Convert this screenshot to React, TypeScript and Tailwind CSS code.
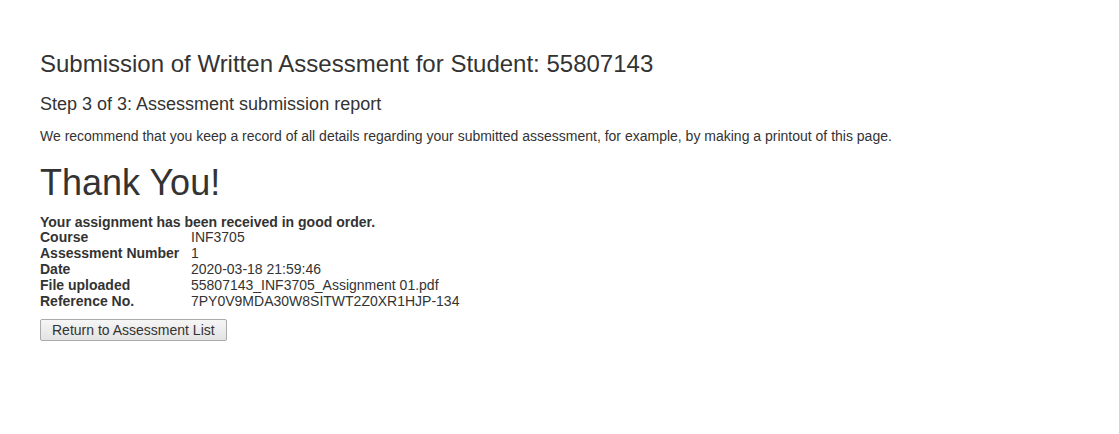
import React from "react";

export default function App() {
  const rows: [string, string][] = [
    ["Course", "INF3705"],
    ["Assessment Number", "1"],
    ["Date", "2020-03-18 21:59:46"],
    ["File uploaded", "55807143_INF3705_Assignment 01.pdf"],
    ["Reference No.", "7PY0V9MDA30W8SITWT2Z0XR1HJP-134"],
  ];
  return (
    <div className="w-[1119px] h-[434px] bg-white text-[#333] px-[40px] pt-[50px] font-['Liberation_Sans',Arial,sans-serif]">
      <h3 className="text-[24px] leading-[28px] m-0">Submission of Written Assessment for Student: 55807143</h3>
      <h4 className="text-[18px] leading-[20px] mt-[16px]">Step 3 of 3: Assessment submission report</h4>
      <p className="text-[14px] leading-[20px] mt-[12px]">
        We recommend that you keep a record of all details regarding your submitted assessment, for example, by making a printout of this page.
      </p>
      <h1 className="text-[36px] leading-[40px] mt-[17px]">Thank You!</h1>
      <div className="text-[14px] leading-[16px] mt-[11px]">
        <div className="font-bold">Your assignment has been received in good order.</div>
        <table className="border-collapse -mt-[1px]">
          <tbody>
            {rows.map(([k, v]) => (
              <tr key={k}>
                <td className="font-bold p-0 pr-[11px] w-[151px]">{k}</td>
                <td className="p-0">{v}</td>
              </tr>
            ))}
          </tbody>
        </table>
      </div>
      <button className="mt-[10px] h-[22px] px-[11px] text-[14px] leading-[16px] text-[#333] border border-[#aaa] rounded-[2px] bg-gradient-to-b from-[#f6f6f6] to-[#e3e3e3]">
        Return to Assessment List
      </button>
    </div>
  );
}
